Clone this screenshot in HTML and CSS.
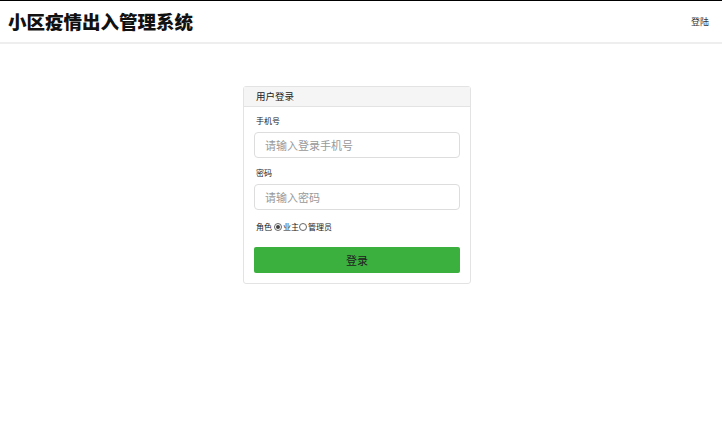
FILE: index.html
```html
<!DOCTYPE html>
<html lang="zh">
<head>
<meta charset="utf-8">
<title>小区疫情出入管理系统</title>
<link rel="stylesheet" href="styles.css">
</head>
<body>
<header class="topbar">
  <h1 class="brand">小区疫情出入管理系统</h1>
  <a class="login-link" href="#">登陆</a>
</header>
<main class="page">
  <section class="card">
    <div class="card-head">用户登录</div>
    <form class="card-body">
      <label class="field-label">手机号</label>
      <input class="field-input" type="text" placeholder="请输入登录手机号">
      <label class="field-label">密码</label>
      <input class="field-input" type="password" placeholder="请输入密码">
      <div class="role-row">
        <span>角色</span>
        <span class="radio checked"></span><span>业主</span><span class="radio"></span><span>管理员</span>
      </div>
      <button class="submit" type="button">登录</button>
    </form>
  </section>
</main>
</body>
</html>
```

FILE: styles.css
```css
* { box-sizing: border-box; }
html, body { margin: 0; padding: 0; background: #fff; }
body {
  font-family: "Noto Sans CJK SC", "Liberation Sans", sans-serif;
  color: #333;
  border-top: 1px solid #000;
}
.topbar {
  height: 43px;
  border-bottom: 2px solid #eeeeee;
  display: flex;
  align-items: center;
  justify-content: space-between;
  padding: 0 13px 0 8px;
}
.brand {
  margin: 0;
  font-size: 18.5px;
  font-weight: 900;
  color: #111;
  line-height: 1;
}
.login-link {
  font-size: 9px;
  color: #333;
  text-decoration: none;
}
.page {
  display: flex;
  justify-content: center;
  padding: 42px 8px 0 0;
}
.card {
  width: 228px;
  border: 1px solid #e3e3e3;
  border-radius: 3px;
  background: #fff;
}
.card-head {
  height: 20px;
  line-height: 19px;
  background: #f5f5f5;
  border-bottom: 1px solid #e3e3e3;
  padding-left: 12px;
  font-size: 9.5px;
  color: #222;
}
.card-body {
  display: flex;
  flex-direction: column;
  padding: 7px 10px 10px;
  margin: 0;
}
.field-label {
  font-size: 8px;
  line-height: 14px;
  color: #222;
  margin-bottom: 4px;
  padding-left: 2px;
}
.field-input {
  height: 26px;
  border: 1px solid #dddddd;
  border-radius: 4px;
  padding: 0 10px;
  font-size: 11px;
  font-family: inherit;
  color: #333;
  margin-bottom: 8px;
  outline: none;
}
.field-input::placeholder { color: #999; }
.role-row {
  display: flex;
  align-items: center;
  font-size: 8px;
  line-height: 14px;
  color: #222;
  margin-top: 2px;
  margin-bottom: 13px;
  padding-left: 2px;
}
.role-row > span:first-child { margin-right: 2px; }
.radio {
  width: 8px;
  height: 8px;
  border: 1px solid #666;
  border-radius: 50%;
  display: inline-block;
  position: relative;
  margin-right: 1px;
}
.radio.checked::after {
  content: "";
  position: absolute;
  left: 1px; top: 1px;
  width: 4px; height: 4px;
  border-radius: 50%;
  background: #444;
}
.submit {
  height: 26px;
  border: none;
  border-radius: 2px;
  background: #3bb03e;
  color: #222;
  font-size: 11px;
  font-family: inherit;
  cursor: pointer;
}
```
